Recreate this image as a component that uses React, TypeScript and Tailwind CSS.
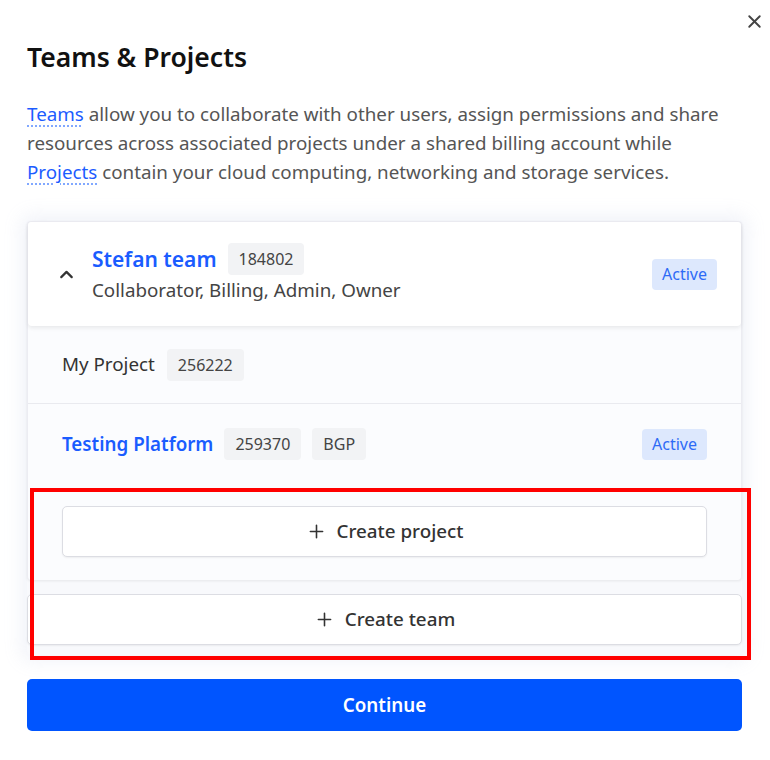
import { Plus, X, ChevronUp } from 'lucide-react';

function Chip({ children }: { children: React.ReactNode }) {
  return (
    <span className="inline-flex h-[32px] items-center rounded-[4px] bg-[#f2f3f5] px-[11px] text-[16px] text-[#444]">
      {children}
    </span>
  );
}

function ActiveBadge() {
  return (
    <span className="inline-flex h-[31px] items-center rounded-[4px] bg-[#dde8fd] px-[10px] text-[16px] text-[#2e6bf6]">
      Active
    </span>
  );
}

export default function App() {
  return (
    <div className="relative h-[760px] w-[770px] bg-white font-['Noto_Sans',sans-serif] text-[#222]">
      <button className="absolute right-[5px] top-[11px] text-[#444]">
        <X size={21} strokeWidth={2.2} />
      </button>

      <div className="px-[27px] pr-[28px] pt-[37px]">
        <h1 className="text-[26.5px] font-semibold leading-[40px] text-[#111]">Teams &amp; Projects</h1>

        <p className="mt-[23px] text-[18.8px] leading-[29px] text-[#555]">
          <a className="text-[#1c5cff] underline decoration-[#7aa3ff] decoration-dotted underline-offset-[5px]">Teams</a> allow you to
          collaborate with other users, assign permissions and share resources across associated projects
          under a shared billing account while{' '}
          <a className="text-[#1c5cff] underline decoration-[#7aa3ff] decoration-dotted underline-offset-[5px]">Projects</a> contain your
          cloud computing, networking and storage services.
        </p>

        {/* teams list */}
        <div className="mt-[34px] flex h-[434px] flex-col rounded-[4px] bg-[#f8f9fc] shadow-[0_0_18px_6px_rgba(240,242,248,0.9)]">
          <div className="rounded-[4px] border border-b-0 border-[#ececf2] bg-[#fbfcfe] shadow-[0_1px_3px_rgba(0,0,0,0.08)]">
            <div className="flex h-[104px] items-center rounded-[4px] bg-white pl-[28px] pr-[24px] shadow-[0_2px_4px_rgba(0,0,0,0.08)]">
              <ChevronUp size={21} strokeWidth={2.5} className="text-[#333]" />
              <div className="ml-[15px] flex-1">
                <div className="flex items-center gap-[11px]">
                  <span className="text-[21px] font-semibold text-[#1a5cff]">Stefan team</span>
                  <Chip>184802</Chip>
                </div>
                <div className="mt-[1px] text-[18.8px] text-[#444]">Collaborator, Billing, Admin, Owner</div>
              </div>
              <ActiveBadge />
            </div>

            <div className="flex h-[78px] items-center gap-[12px] border-b border-[#e9eaef] px-[34px]">
              <span className="text-[18.8px] text-[#333]">My Project</span>
              <Chip>256222</Chip>
            </div>

            <div className="flex h-[80px] items-center gap-[11px] px-[34px]">
              <span className="text-[18.8px] font-semibold text-[#1a5cff]">Testing Platform</span>
              <Chip>259370</Chip>
              <Chip>BGP</Chip>
              <span className="flex-1" />
              <ActiveBadge />
            </div>

            <div className="rounded-b-[4px] px-[34px] pb-[23px] pt-[22px]">
              <button className="flex h-[51px] w-full items-center justify-center gap-[10px] rounded-[5px] border border-[#dcdde3] bg-white text-[18.8px] font-medium text-[#333] shadow-[0_1px_2px_rgba(0,0,0,0.06)]">
                <Plus size={21} strokeWidth={1.8} />
                Create project
              </button>
            </div>
          </div>

          <button className="mt-[14px] flex h-[51px] w-full items-center justify-center gap-[10px] rounded-[5px] border border-[#dcdde3] bg-white text-[18.8px] font-medium text-[#333] shadow-[0_1px_2px_rgba(0,0,0,0.06)]">
            <Plus size={21} strokeWidth={1.8} />
            Create team
          </button>
        </div>

        <button className="mt-[24px] flex h-[52px] w-full items-center justify-center rounded-[5px] bg-[#0055ff] text-[18.8px] font-semibold text-white">
          Continue
        </button>
      </div>

      {/* annotation */}
      <div className="pointer-events-none absolute left-[30px] top-[488px] h-[172px] w-[721px] border-[4px] border-[#ff0000]" />
    </div>
  );
}
